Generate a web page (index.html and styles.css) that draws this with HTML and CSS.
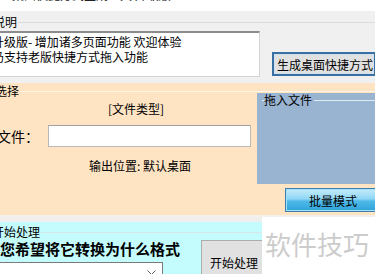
FILE: index.html
```html
<!DOCTYPE html>
<html lang="zh-CN">
  <head>
    <meta charset="UTF-8" />
    <meta name="viewport" content="width=device-width, initial-scale=1.0" />
    <title>桌面快捷方式生成工具</title>
    <link rel="stylesheet" href="styles.css">
  </head>
  <body>
    <div class="titlebar"><span>桌面快捷方式生成工具 升级版</span></div>
    <div class="window">
      <section class="grp grp-info">
        <div class="legend"><span>说明</span><i></i></div>
        <div class="info-row">
          <div class="notes">升级版- 增加诸多页面功能 欢迎体验<br>仍支持老版快捷方式拖入功能</div>
          <button class="btn btn-focus">生成桌面快捷方式</button>
        </div>
      </section>

      <section class="grp grp-pick">
        <div class="legend"><span>选择</span><i></i></div>
        <div class="pick-body">
          <div class="pick-left">
            <div class="type-label">[文件类型]</div>
            <div class="file-row">
              <label class="file-label">文件：</label>
              <input class="file-input" type="text">
            </div>
            <div class="out-label">输出位置: 默认桌面</div>
          </div>
          <div class="pick-right">
            <div class="drop">
              <div class="legend"><b></b><span>拖入文件</span><i></i></div>
            </div>
            <button class="btn btn-batch">批量模式</button>
          </div>
        </div>
      </section>

      <div class="sep"></div>

      <section class="grp grp-run">
        <div class="legend"><span>开始处理</span><i></i></div>
        <div class="run-body">
          <div class="run-left">
            <div class="run-title">您希望将它转换为什么格式</div>
            <div class="combo">
              <svg width="9" height="6" viewBox="0 0 9 6"><path d="M0.5 0.5 L4.5 4.5 L8.5 0.5" fill="none" stroke="#606060" stroke-width="1"/></svg>
            </div>
          </div>
          <button class="btn btn-run">开始处理</button>
        </div>
      </section>

      <div class="watermark">软件技巧</div>
    </div>
  </body>
</html>
```

FILE: styles.css
```css
* {
  margin: 0;
  padding: 0;
  box-sizing: border-box;
}
body {
  width: 375px;
  height: 274px;
  overflow: hidden;
  background: #f0f0f0;
  font-family: "Noto Sans CJK SC", "Liberation Sans", sans-serif;
  font-size: 12px;
  color: #000;
}
.titlebar {
  height: 11px;
  background: #fff;
  overflow: hidden;
  padding-left: 12px;
}
.titlebar span {
  display: block;
  margin-top: -12px;
  line-height: 14px;
  color: #222;
}
.window {
  position: relative;
  margin-left: -9px;
  width: 400px;
}

/* group boxes */
.legend {
  display: flex;
  align-items: center;
  height: 16px;
  line-height: 16px;
}
.legend span {
  white-space: nowrap;
}
.legend i {
  flex: 1;
  height: 1px;
  margin-left: 1px;
  background: #dcdcdc;
}
.grp-info {
  height: 72px;
  padding-top: 3px;
}
.grp-info .legend {
  padding-left: 2px;
}
.info-row {
  display: flex;
  align-items: flex-start;
  margin-top: 1px;
}
.notes {
  width: 269px;
  height: 46px;
  background: #fff;
  border-top: 2px solid #8c8c8c;
  border-right: 1px solid #d4d4d4;
  border-bottom: 1px solid #d4d4d4;
  padding: 1px 0 0 1px;
  line-height: 15px;
  white-space: nowrap;
  overflow: hidden;
}
.btn {
  font-family: inherit;
  font-size: 12px;
  color: #000;
  background: #e1e1e1;
  border: 1px solid #adadad;
  white-space: nowrap;
}
.btn-focus {
  margin: 21px 0 0 12px;
  width: 104px;
  height: 24px;
  border: 2px solid #3a6fa3;
  box-shadow: inset 0 0 0 1px #cfe0ef;
  text-align: left;
  padding-left: 3px;
}

.grp-pick {
  height: 132px;
  background: #ffe4c4;
}
.grp-pick .legend {
  padding-left: 4px;
}
.grp-pick > .legend i {
  background: #fff3e6;
}
.pick-body {
  display: flex;
  margin-top: -6px;
}
.pick-left {
  width: 266px;
  padding-top: 8px;
}
.type-label {
  line-height: 16px;
  padding-left: 117px;
}
.file-row {
  display: flex;
  align-items: center;
  margin-top: 8px;
  height: 22px;
}
.file-label {
  width: 57px;
  padding-left: 6px;
  font-size: 14px;
}
.file-input {
  width: 203px;
  height: 22px;
  background: #fff;
  border: 1px solid #b8b8b8;
  border-top-color: #a0a0a0;
}
.out-label {
  margin-top: 11px;
  line-height: 16px;
  padding-left: 98px;
}
.pick-right {
  flex: 1;
}
.drop {
  height: 91px;
  background: #99b4d1;
  padding-top: 1px;
}
.drop .legend {
  height: 12px;
  line-height: 12px;
}
.drop .legend b {
  width: 4px;
  height: 1px;
  margin-left: 1px;
  background: #e4eaf2;
}
.drop .legend span {
  padding: 0 1px 0 0;
  margin-left: -2px;
}
.drop .legend i {
  background: #e4eaf2;
}
.btn-batch {
  display: block;
  margin: 4px 0 0 28px;
  width: 96px;
  height: 24px;
  border: 1px solid #3d7fb0;
  background: linear-gradient(#c6ecfb 0%, #8fd6f4 45%, #4eb9e8 55%, #2fa3da 100%);
  box-shadow: inset 0 0 0 1px #a6e0f7;
}

.sep {
  height: 7px;
  background: linear-gradient(#f4f0ec, #eeeeee);
}

.grp-run {
  height: 60px;
  background: #c4fbfc;
  padding-top: 3px;
}
.grp-run .legend {
  height: 14px;
  line-height: 14px;
  padding-left: 1px;
}
.grp-run .legend i {
  background: #d8e6e6;
}
.run-body {
  display: flex;
  align-items: flex-start;
  margin-top: 1px;
}
.run-left {
  width: 200px;
}
.run-title {
  font-size: 15px;
  font-weight: bold;
  line-height: 18px;
  padding-left: 9px;
  white-space: nowrap;
}
.combo {
  display: flex;
  justify-content: flex-end;
  margin: 4px 0 0 4px;
  width: 168px;
  height: 22px;
  background: #fff;
  border: 1px solid #7a7a7a;
  padding: 7px 6px 0 0;
}
.combo svg {
  display: block;
}
.btn-run {
  margin-left: 10px;
  width: 66px;
  height: 44px;
}

.watermark {
  position: absolute;
  left: 271px;
  top: 206px;
  width: 140px;
  height: 80px;
  background: #fff;
  padding: 14px 0 0 3px;
  font-size: 26px;
  line-height: 26px;
  color: #cccccc;
  white-space: nowrap;
}
```
